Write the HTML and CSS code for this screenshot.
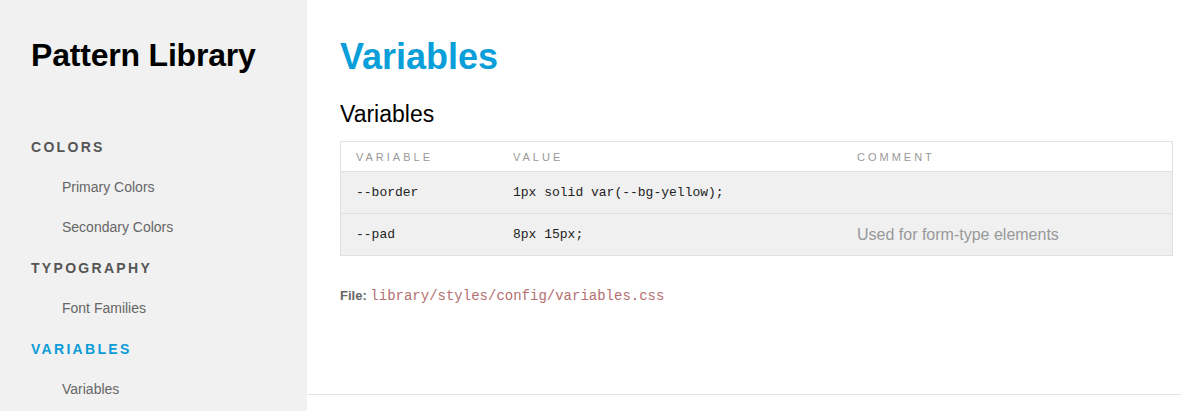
FILE: index.html
```html
<!DOCTYPE html>
<html lang="en">
<head>
<meta charset="utf-8">
<title>Pattern Library</title>
<link rel="stylesheet" href="styles.css">
</head>
<body>
<div class="page">
  <aside class="sidebar">
    <h1 class="brand">Pattern Library</h1>
    <nav class="nav">
      <div class="nav-heading">Colors</div>
      <a class="nav-item" href="#">Primary Colors</a>
      <a class="nav-item" href="#">Secondary Colors</a>
      <div class="nav-heading">Typography</div>
      <a class="nav-item" href="#">Font Families</a>
      <div class="nav-heading nav-heading-active">Variables</div>
      <a class="nav-item" href="#">Variables</a>
    </nav>
  </aside>
  <main class="main">
    <section class="section">
      <h1 class="page-title">Variables</h1>
      <h2 class="section-title">Variables</h2>
      <table class="vars">
        <thead>
          <tr>
            <th class="col-var">Variable</th>
            <th class="col-val">Value</th>
            <th class="col-com">Comment</th>
          </tr>
        </thead>
        <tbody>
          <tr>
            <td class="code">--border</td>
            <td class="code">1px solid var(--bg-yellow);</td>
            <td class="comment"></td>
          </tr>
          <tr>
            <td class="code">--pad</td>
            <td class="code">8px 15px;</td>
            <td class="comment">Used for form-type elements</td>
          </tr>
        </tbody>
      </table>
      <p class="file"><span class="file-label">File:</span> <code class="file-path">library/styles/config/variables.css</code></p>
    </section>
  </main>
</div>
</body>
</html>
```

FILE: styles.css
```css
html, body {
  margin: 0;
  padding: 0;
  background: #ffffff;
}

body {
  font-family: "Liberation Sans", Arial, Helvetica, sans-serif;
  color: #000;
}

.page {
  display: flex;
  min-height: 411px;
}

.sidebar {
  flex: 0 0 307px;
  width: 307px;
  background: #f1f1f1;
  padding: 35px 0 0 31px;
  box-sizing: border-box;
}

.brand {
  margin: 0;
  font-size: 32px;
  line-height: 40px;
  font-weight: 700;
  color: #000;
  letter-spacing: -0.2px;
}

.nav {
  display: flex;
  flex-direction: column;
  margin-top: 53px;
}

.nav-heading {
  font-size: 14px;
  font-weight: 700;
  line-height: 39px;
  margin-top: 2px;
  letter-spacing: 2.3px;
  text-transform: uppercase;
  color: #555555;
}

.nav-heading:first-child {
  margin-top: 0;
}

.nav-heading-active {
  color: #0b9bd7;
}

.nav-item {
  display: block;
  font-size: 14px;
  line-height: 40px;
  color: #666666;
  text-decoration: none;
  padding-left: 31px;
}

.main {
  flex: 1 1 auto;
  min-width: 0;
}

.section {
  box-sizing: border-box;
  height: 395px;
  border-bottom: 1px solid #e3e3e3;
  padding: 35px 8px 0 33px;
}

.page-title {
  margin: 0;
  font-size: 36px;
  line-height: 44px;
  font-weight: 700;
  color: #0a9fd9;
}

.section-title {
  margin: 21px 0 0;
  font-size: 23px;
  line-height: 28px;
  font-weight: 400;
  color: #000;
}

.vars {
  margin-top: 13px;
  width: 100%;
  border-collapse: collapse;
  border: 1px solid #e0e0e0;
}

.vars th {
  text-align: left;
  font-size: 11px;
  font-weight: 400;
  letter-spacing: 3px;
  text-transform: uppercase;
  color: #999999;
  height: 29px;
  padding: 0 15px;
  background: #fff;
  border-bottom: 1px solid #e0e0e0;
}

.col-var { width: 127px; }
.col-val { width: 314px; }

.vars td {
  height: 41px;
  padding: 0 15px;
  background: #f0f0f0;
  border-bottom: 1px solid #e0e0e0;
  vertical-align: middle;
}

.vars td.code {
  font-family: "Liberation Mono", "Courier New", monospace;
  font-size: 13px;
  color: #222;
}

.vars td.comment {
  font-size: 16px;
  color: #999999;
}

.file {
  margin: 32px 0 0;
  font-size: 13px;
  line-height: 16px;
}

.file-label {
  font-weight: 700;
  color: #666666;
}

.file-path {
  font-family: "Liberation Mono", "Courier New", monospace;
  font-size: 14px;
  color: #b46f6f;
}
```
